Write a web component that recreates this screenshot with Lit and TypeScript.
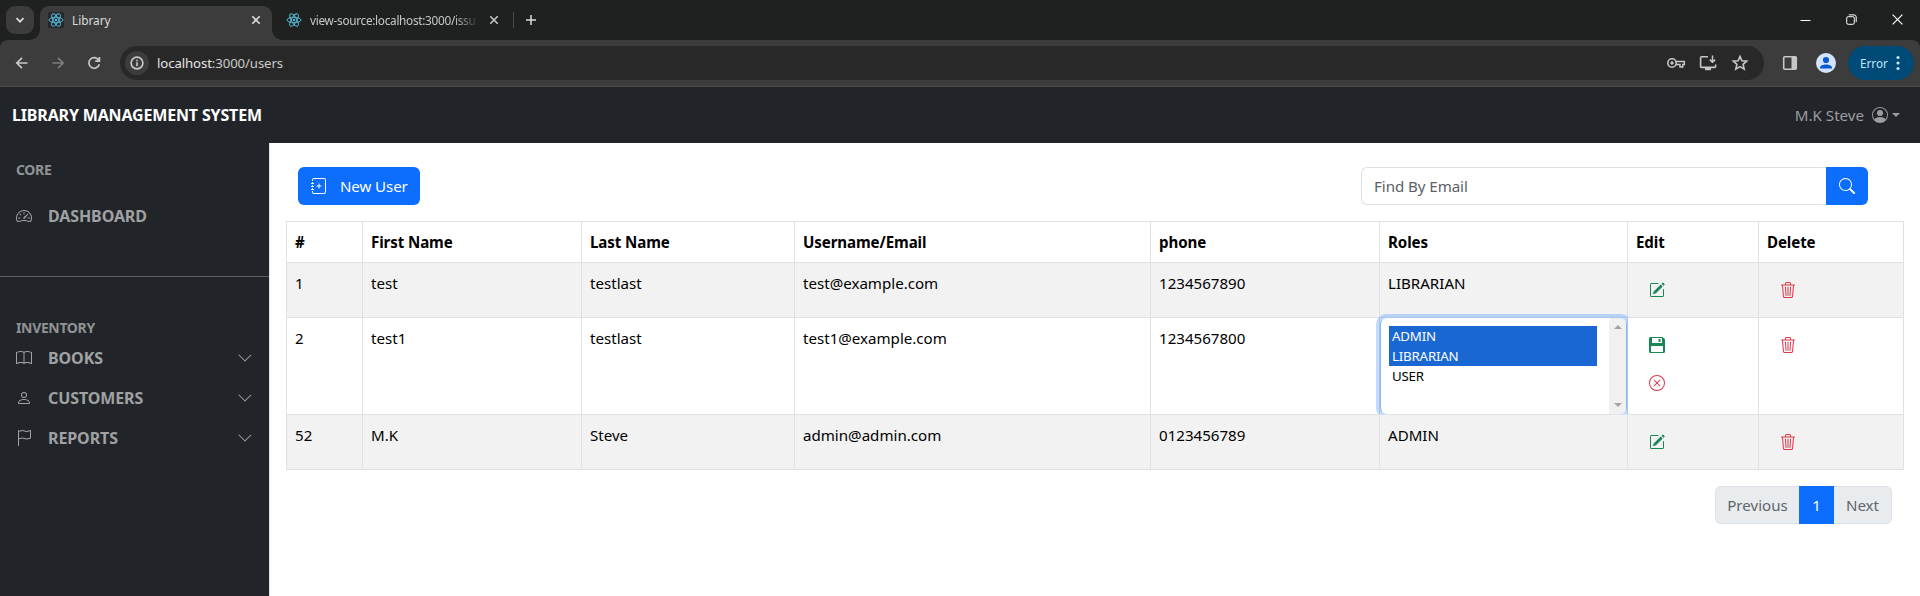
import { LitElement, html, css, svg } from "lit";
import { customElement, property } from "lit/decorators.js";

const ICONS: Record<string, string[]> = {
  speedometer: [
    "M8 4a.5.5 0 0 1 .5.5V6a.5.5 0 0 1-1 0V4.5A.5.5 0 0 1 8 4zM3.732 5.732a.5.5 0 0 1 .707 0l.915.914a.5.5 0 1 1-.708.708l-.914-.915a.5.5 0 0 1 0-.707zM2 10a.5.5 0 0 1 .5-.5h1.586a.5.5 0 0 1 0 1H2.5A.5.5 0 0 1 2 10zm9.5 0a.5.5 0 0 1 .5-.5h1.5a.5.5 0 0 1 0 1H12a.5.5 0 0 1-.5-.5zm.754-4.246a.389.389 0 0 0-.527-.02L7.547 9.31a.91.91 0 1 0 1.302 1.258l3.434-4.297a.389.389 0 0 0-.029-.518z",
    "M0 10a8 8 0 1 1 15.547 2.661c-.442 1.253-1.845 1.602-2.932 1.25C11.309 13.488 9.475 13 8 13c-1.474 0-3.31.488-4.615.911-1.087.352-2.49.003-2.932-1.25A7.988 7.988 0 0 1 0 10zm8-7a7 7 0 0 0-6.603 9.329c.203.575.923.876 1.68.63C4.397 12.533 6.358 12 8 12s3.604.532 4.923.96c.757.245 1.477-.056 1.68-.631A7 7 0 0 0 8 3z",
  ],
  book: [
    "M1 2.828c.885-.37 2.154-.769 3.388-.893 1.33-.134 2.458.063 3.112.752v9.746c-.935-.53-2.12-.603-3.213-.493-1.18.12-2.37.461-3.287.811V2.828zm7.5-.141c.654-.689 1.782-.886 3.112-.752 1.234.124 2.503.523 3.388.893v9.923c-.918-.35-2.107-.692-3.287-.81-1.094-.111-2.278-.039-3.213.492V2.687zM8 1.783C7.015.936 5.587.81 4.287.94c-1.514.153-3.042.672-3.994 1.105A.5.5 0 0 0 0 2.5v11a.5.5 0 0 0 .707.455c.882-.4 2.303-.881 3.68-1.02 1.409-.142 2.59.087 3.223.877a.5.5 0 0 0 .78 0c.633-.79 1.814-1.019 3.222-.877 1.378.139 2.8.62 3.681 1.02A.5.5 0 0 0 16 13.5v-11a.5.5 0 0 0-.293-.455c-.952-.433-2.48-.952-3.994-1.105C10.413.809 8.985.936 8 1.783z",
  ],
  person: [
    "M8 8a3 3 0 1 0 0-6 3 3 0 0 0 0 6Zm2-3a2 2 0 1 1-4 0 2 2 0 0 1 4 0Zm4 8c0 1-1 1-1 1H3s-1 0-1-1 1-4 6-4 6 3 6 4Zm-1-.004c-.001-.246-.154-.986-.832-1.664C11.516 10.68 10.289 10 8 10c-2.29 0-3.516.68-4.168 1.332-.678.678-.83 1.418-.832 1.664h10Z",
  ],
  flag: [
    "M14.778.085A.5.5 0 0 1 15 .5V8a.5.5 0 0 1-.314.464L14.5 8l.186.464-.003.001-.006.003-.023.009a12.435 12.435 0 0 1-.397.15c-.264.095-.631.223-1.047.35-.816.252-1.879.523-2.71.523-.847 0-1.548-.28-2.158-.525l-.028-.01C7.68 8.71 7.14 8.5 6.5 8.5c-.7 0-1.638.23-2.437.477A19.626 19.626 0 0 0 3 9.342V15.5a.5.5 0 0 1-1 0V.5a.5.5 0 0 1 1 0v.282c.226-.079.496-.17.79-.26C4.606.272 5.67 0 6.5 0c.84 0 1.524.277 2.121.519l.043.018C9.286.788 9.828 1 10.5 1c.7 0 1.638-.23 2.437-.477a19.587 19.587 0 0 0 1.349-.476l.019-.007.004-.002h.001M14 1.221c-.22.078-.48.167-.766.255-.81.252-1.872.523-2.734.523-.886 0-1.592-.286-2.203-.534l-.008-.003C7.662 1.21 7.139 1 6.5 1c-.669 0-1.606.229-2.415.478A21.294 21.294 0 0 0 3 1.845v6.433c.22-.078.48-.167.766-.255C4.576 7.77 5.638 7.5 6.5 7.5c.847 0 1.548.28 2.158.525l.028.01C9.32 8.29 9.86 8.5 10.5 8.5c.668 0 1.606-.229 2.415-.478A21.317 21.317 0 0 0 14 7.655V1.222z",
  ],
  chevron: [
    "M1.646 4.646a.5.5 0 0 1 .708 0L8 10.293l5.646-5.647a.5.5 0 0 1 .708.708l-6 6a.5.5 0 0 1-.708 0l-6-6a.5.5 0 0 1 0-.708z",
  ],
  journal: [
    "M8 5.5a.5.5 0 0 1 .5.5v1.5H10a.5.5 0 0 1 0 1H8.5V10a.5.5 0 0 1-1 0V8.5H6a.5.5 0 0 1 0-1h1.5V6a.5.5 0 0 1 .5-.5z",
    "M3 0h10a2 2 0 0 1 2 2v12a2 2 0 0 1-2 2H3a2 2 0 0 1-2-2v-1h1v1a1 1 0 0 0 1 1h10a1 1 0 0 0 1-1V2a1 1 0 0 0-1-1H3a1 1 0 0 0-1 1v1H1V2a2 2 0 0 1 2-2z",
    "M1 5v-.5a.5.5 0 0 1 1 0V5h.5a.5.5 0 0 1 0 1h-2a.5.5 0 0 1 0-1H1zm0 3v-.5a.5.5 0 0 1 1 0V8h.5a.5.5 0 0 1 0 1h-2a.5.5 0 0 1 0-1H1zm0 3v-.5a.5.5 0 0 1 1 0v.5h.5a.5.5 0 0 1 0 1h-2a.5.5 0 0 1 0-1H1z",
  ],
  search: [
    "M11.742 10.344a6.5 6.5 0 1 0-1.397 1.398h-.001c.03.04.062.078.098.115l3.85 3.85a1 1 0 0 0 1.415-1.414l-3.85-3.85a1.007 1.007 0 0 0-.115-.1zM12 6.5a5.5 5.5 0 1 1-11 0 5.5 5.5 0 0 1 11 0z",
  ],
  edit: [
    "M15.502 1.94a.5.5 0 0 1 0 .706L14.459 3.69l-2-2L13.502.646a.5.5 0 0 1 .707 0l1.293 1.293zm-1.75 2.456-2-2L4.939 9.21a.5.5 0 0 0-.121.196l-.805 2.414a.25.25 0 0 0 .316.316l2.414-.805a.5.5 0 0 0 .196-.12l6.813-6.814z",
    "M1 13.5A1.5 1.5 0 0 0 2.5 15h11a1.5 1.5 0 0 0 1.5-1.5v-6a.5.5 0 0 0-1 0v6a.5.5 0 0 1-.5.5h-11a.5.5 0 0 1-.5-.5v-11a.5.5 0 0 1 .5-.5H9a.5.5 0 0 0 0-1H2.5A1.5 1.5 0 0 0 1 2.5v11z",
  ],
  save: [
    "M1.5 0H13.1a1.5 1.5 0 0 1 1.06.44l1.4 1.4A1.5 1.5 0 0 1 16 2.9V14.5a1.5 1.5 0 0 1-1.5 1.5h-13A1.5 1.5 0 0 1 0 14.5v-13A1.5 1.5 0 0 1 1.5 0zM3 1v4.5a.5.5 0 0 0 .5.5h9a.5.5 0 0 0 .5-.5V1zM9.5 2h2v3h-2zM2 9.5V15h12V9.5a.5.5 0 0 0-.5-.5h-11a.5.5 0 0 0-.5.5z",
  ],
  cancel: [
    "M8 15A7 7 0 1 1 8 1a7 7 0 0 1 0 14zm0 1A8 8 0 1 0 8 0a8 8 0 0 0 0 16z",
    "M4.646 4.646a.5.5 0 0 1 .708 0L8 7.293l2.646-2.647a.5.5 0 0 1 .708.708L8.707 8l2.647 2.646a.5.5 0 0 1-.708.708L8 8.707l-2.646 2.647a.5.5 0 0 1-.708-.708L7.293 8 4.646 5.354a.5.5 0 0 1 0-.708z",
  ],
  trash: [
    "M6.5 1h3a.5.5 0 0 1 .5.5v1H6v-1a.5.5 0 0 1 .5-.5ZM11 2.5v-1A1.5 1.5 0 0 0 9.5 0h-3A1.5 1.5 0 0 0 5 1.5v1H2.506a.58.58 0 0 0-.01 0H1.5a.5.5 0 0 0 0 1h.538l.853 10.66A2 2 0 0 0 4.885 16h6.23a2 2 0 0 0 1.994-1.84l.853-10.66h.538a.5.5 0 0 0 0-1h-.995a.59.59 0 0 0-.01 0H11Zm1.958 1-.846 10.58a1 1 0 0 1-.997.92h-6.23a1 1 0 0 1-.997-.92L3.042 3.5h9.916Zm-7.487 1a.5.5 0 0 1 .528.47l.5 8.5a.5.5 0 0 1-.998.06L5 5.03a.5.5 0 0 1 .47-.53Zm5.058 0a.5.5 0 0 1 .47.53l-.5 8.5a.5.5 0 1 1-.998-.06l.5-8.5a.5.5 0 0 1 .528-.47ZM8 4.5a.5.5 0 0 1 .5.5v8.5a.5.5 0 0 1-1 0V5a.5.5 0 0 1 .5-.5Z",
  ],
  account: [
    "M11 6a3 3 0 1 1-6 0 3 3 0 0 1 6 0z",
    "M0 8a8 8 0 1 1 16 0A8 8 0 0 1 0 8zm8-7a7 7 0 0 0-5.468 11.37C3.242 11.226 4.805 10 8 10s4.757 1.225 5.468 2.37A7 7 0 0 0 8 1z",
  ],
};

const icon = (name: string, cls = "") => html`<svg class="bi ${cls}" viewBox="0 0 16 16" fill="currentColor">
  ${ICONS[name].map((d) => svg`<path fill-rule="evenodd" d=${d}></path>`)}
</svg>`;

const line = (size: number, body: unknown, cls = "") => html`<svg
  class="line ${cls}" width=${size} height=${size} viewBox="0 0 ${size} ${size}"
  fill="none" stroke="currentColor">${body}</svg>`;

const reactLogo = html`<svg class="logo" viewBox="0 0 16 16" fill="none" stroke="#58b9d4" stroke-width="0.95">
  <ellipse cx="8" cy="8" rx="7" ry="2.7"></ellipse>
  <ellipse cx="8" cy="8" rx="7" ry="2.7" transform="rotate(60 8 8)"></ellipse>
  <ellipse cx="8" cy="8" rx="7" ry="2.7" transform="rotate(120 8 8)"></ellipse>
  <circle cx="8" cy="8" r="1.3" fill="#58b9d4" stroke="none"></circle>
</svg>`;

const closeGlyph = line(10, svg`<path d="M1.3 1.3l7.4 7.4M8.7 1.3L1.3 8.7" stroke-width="1.6"></path>`);

@customElement("browser-chrome")
class BrowserChrome extends LitElement {
  static styles = css`
    :host { display: block; font-family: "Noto Sans", "Open Sans", sans-serif; color: #dcdcdc; }
    svg { display: block; flex: none; }
    .strip { display: flex; height: 40px; background: #1f2120; padding-left: 6px; box-sizing: border-box; }
    .tabsearch { width: 28px; height: 28px; margin: 6px 6px 0 0; border-radius: 9px; background: #3c3c3c; display: grid; place-items: center; }
    .tab { display: flex; align-items: center; height: 28px; margin-top: 6px; padding-bottom: 6px; box-sizing: content-box; font-size: 11.8px; }
    .tab span { white-space: nowrap; }
    .active { position: relative; width: 232px; box-sizing: border-box; height: 34px; background: #3c3c3c; border-radius: 9px 9px 0 0; padding: 0 11px 6px 8px; }
    .active::before, .active::after { content: ""; position: absolute; bottom: 0; width: 10px; height: 10px; }
    .active::before { left: -10px; background: radial-gradient(circle at 0 0, transparent 9.5px, #3c3c3c 10px); }
    .active::after { right: -10px; background: radial-gradient(circle at 100% 0, transparent 9.5px, #3c3c3c 10px); }
    .logo { width: 16px; height: 16px; margin-right: 8px; border-radius: 2px; }
    .active .logo { background: #24272b; }
    .grow { flex: 1; }
    .other { margin-left: 14px; color: #c7c7c7; }
    .other span { width: 168px; margin-right: 11px; letter-spacing: -0.3px; -webkit-mask-image: linear-gradient(90deg, #000 144px, transparent 170px); mask-image: linear-gradient(90deg, #000 144px, transparent 170px); }
    .sep { width: 1px; height: 16px; background: #4a4b4b; margin: 12px 11px 0 14px; }
    .new { margin-top: 14px; }
    .win { display: flex; gap: 35px; padding: 14px 17px 0 0; color: #fff; }
    .bar { display: flex; align-items: center; height: 47px; box-sizing: border-box; padding: 0 6px 1px 14px; background: #3c3c3c; border-bottom: 1px solid #4a4a4a; border-radius: 8px 8px 0 0; }
    .wrap { background: linear-gradient(#1f2120 50%, #212529 50%); }
    .bar { border-radius: 8px 8px 0 0; }
    .navs { display: flex; gap: 20px; width: 106px; color: #c7c7c7; }
    .navs .dim { color: #7c7c7c; }
    .omni { flex: 1; display: flex; align-items: center; height: 34px; border-radius: 17px; background: #282828; padding: 0 14px 0 5px; font-size: 13.2px; color: #c9cac9; }
    .info { width: 24px; height: 24px; border-radius: 50%; background: #3c3c3c; display: grid; place-items: center; margin-right: 8px; }
    .url { flex: 1; letter-spacing: -0.1px; }
    .url b { font-weight: 400; color: #e6e6e6; }
    .tools { display: flex; gap: 12px; align-items: center; color: #c7c7c7; }
    .panel { margin: 0 18px; color: #c7c7c7; }
    .pill { display: flex; align-items: center; justify-content: space-between; width: 66px; height: 34px; box-sizing: border-box; border-radius: 17px; background: #004a77; color: #c2e7ff; font-size: 11.7px; padding: 0 14px 0 12px; margin-left: 12px; }
  `;

  render() {
    return html`
      <div class="strip">
        <div class="tabsearch">${line(10, svg`<path d="M1.5 3.2L5 6.7L8.5 3.2" stroke-width="1.7"></path>`)}</div>
        <div class="tab active">${reactLogo}<span>Library</span><div class="grow"></div>${closeGlyph}</div>
        <div class="tab other">${reactLogo}<span>view-source:localhost:3000/issu</span>${closeGlyph}</div>
        <div class="sep"></div>
        <div class="new">${line(12, svg`<path d="M6 1v10M1 6h10" stroke-width="1.5"></path>`)}</div>
        <div class="grow"></div>
        <div class="win">
          ${line(11, svg`<path d="M.5 6.5h10" stroke-width="1"></path>`)}
          ${line(11, svg`<rect x=".7" y="2.7" width="7.6" height="7.6" rx="1.5"></rect><path d="M2.8 .9H8a2.2 2.2 0 0 1 2.2 2.2v5"></path>`)}
          ${line(11, svg`<path d="M.6 .6l9.8 9.8M10.4 .6L.6 10.4" stroke-width="1.2"></path>`)}
        </div>
      </div>
      <div class="wrap"><div class="bar">
        <div class="navs">
          ${line(16, svg`<path d="M13.5 8H3M8 2.8L2.8 8L8 13.2" stroke-width="1.7"></path>`)}
          ${line(16, svg`<path d="M2.5 8H13M8 2.8L13.2 8L8 13.2" stroke-width="1.7"></path>`, "dim")}
          ${line(16, svg`<path d="M12.7 5.2A5.3 5.3 0 1 0 13.3 9.2M13.4 2v4.2H9.2" stroke-width="1.7"></path>`)}
        </div>
        <div class="omni">
          <div class="info">${line(14, svg`<circle cx="7" cy="7" r="5.9" stroke-width="1.6"></circle><path d="M7 6.2v4M7 3.8v1.4" stroke-width="1.6"></path>`)}</div>
          <div class="url"><b>localhost</b>:3000/users</div>
          <div class="tools">
            ${line(20, svg`<circle cx="6" cy="10" r="4.2" stroke-width="1.6"></circle><circle cx="6" cy="10" r="1.7" fill="currentColor" stroke="none"></circle><path d="M10 8.6h8.3v2.8h-1.5v2.6h-2.8v-2.6H10" stroke-width="1.5"></path>`)}
            ${line(20, svg`<path d="M10 3.8H3.6a1 1 0 0 0-1 1v8.6a1 1 0 0 0 1 1h13a1 1 0 0 0 1-1V11.5" stroke-width="1.6"></path><path d="M14.5 2.5v6M11.8 6.6l2.7 2.7l2.7-2.7" stroke-width="1.5"></path><path d="M7 16h6" stroke-width="2.4"></path>`)}
            ${line(20, svg`<path d="M10 3.4l1.9 4.4l4.8.4l-3.6 3.2l1.1 4.7L10 13.6l-4.2 2.5l1.1-4.7L3.3 8.2l4.8-.4z" stroke-width="1.6"></path>`)}
          </div>
        </div>
        <div class="panel">${line(16, svg`<rect x="1.7" y="1.7" width="12.6" height="12.6" rx="1" stroke-width="1.6"></rect><path d="M10 2h4v12h-4z" fill="currentColor"></path>`)}</div>
        <svg width="20" height="20" viewBox="0 0 20 20"><circle cx="10" cy="10" r="10" fill="#d3e3fd"></circle><circle cx="10" cy="7" r="3.1" fill="#0b57d0"></circle><path d="M4 15.6v-.9c0-2.3 3.4-3.3 6-3.3s6 1 6 3.3v.9z" fill="#0b57d0"></path></svg>
        <div class="pill">Error<svg width="4" height="16" viewBox="0 0 4 16" fill="#c2e7ff"><circle cx="2" cy="2.5" r="1.6"></circle><circle cx="2" cy="8" r="1.6"></circle><circle cx="2" cy="13.5" r="1.6"></circle></svg></div>
      </div></div>
    `;
  }
}

interface User { id: number; first: string; last: string; email: string; phone: string; role: string; editing?: boolean }

const USERS: User[] = [
  { id: 1, first: "test", last: "testlast", email: "test@example.com", phone: "1234567890", role: "LIBRARIAN" },
  { id: 2, first: "test1", last: "testlast", email: "test1@example.com", phone: "1234567800", role: "", editing: true },
  { id: 52, first: "M.K", last: "Steve", email: "admin@admin.com", phone: "0123456789", role: "ADMIN" },
];

@customElement("user-table")
class UserTable extends LitElement {
  @property({ attribute: false }) users: User[] = [];

  static styles = css`
    :host { display: block; border: solid #dee2e6; border-width: 1px 0 0 1px; color: #000; }
    svg { display: block; width: 16px; height: 16px; }
    .row { display: grid; grid-template-columns: 76px 219px 213px 356px 229px 248px 131px 145px; min-height: 55px; }
    .head { min-height: 41px; font-weight: 700; font-size: 15.1px; letter-spacing: -0.1px; }
    .cell { border: solid #dee2e6; border-width: 0 1px 1px 0; padding: 8px; line-height: 24px; }
    .striped { background: #f2f2f2; }
    .tall { min-height: 97px; }
    .actions { display: flex; flex-direction: column; padding: 8px 8px 8px 20.5px; }
    .act { height: 38px; display: flex; align-items: center; }
    .green { color: #198754; }
    .red { color: #dc3545; }
    .selcell { padding: 0; display: flex; }
    .select { flex: 1; display: flex; background: #fff; border: solid #86b7fe; border-width: 0 1px; border-radius: 6px; box-shadow: 0 0 0 4px rgba(13, 110, 253, 0.25); clip-path: inset(-4px -1px 0 -4px); }
    .options { flex: 1; padding: 8px 12px 0 8px; font-size: 13.3px; line-height: 20px; }
    .opt { padding-left: 3px; letter-spacing: -0.2px; }
    .sel { background: #1967d2; color: #fff; }
    .scroll { width: 17px; background: #f0f0f0; display: flex; flex-direction: column; justify-content: space-between; align-items: center; padding: 7px 0; box-sizing: border-box; border-radius: 0 5px 5px 0; }
    .up, .down { border: 4px solid transparent; }
    .up { border-top-width: 0; border-bottom-color: #a3a3a3; }
    .down { border-bottom-width: 0; border-top-color: #a3a3a3; }
  `;

  render() {
    return html`
      <div class="row head">
        ${["#", "First Name", "Last Name", "Username/Email", "phone", "Roles", "Edit", "Delete"].map((t) => html`<div class="cell">${t}</div>`)}
      </div>
      ${this.users.map((u, i) => html`
        <div class="row ${i % 2 === 0 ? "striped" : ""} ${u.editing ? "tall" : ""}">
          <div class="cell">${u.id}</div>
          <div class="cell">${u.first}</div>
          <div class="cell">${u.last}</div>
          <div class="cell">${u.email}</div>
          <div class="cell">${u.phone}</div>
          ${u.editing
            ? html`<div class="cell selcell"><div class="select">
                <div class="options"><div class="opt sel">ADMIN</div><div class="opt sel">LIBRARIAN</div><div class="opt">USER</div></div>
                <div class="scroll"><div class="up"></div><div class="down"></div></div>
              </div></div>`
            : html`<div class="cell">${u.role}</div>`}
          <div class="cell actions">
            ${u.editing
              ? html`<div class="act green">${icon("save")}</div><div class="act red">${icon("cancel")}</div>`
              : html`<div class="act green">${icon("edit")}</div>`}
          </div>
          <div class="cell actions"><div class="act red">${icon("trash")}</div></div>
        </div>`)}
    `;
  }
}

@customElement("app-root")
class AppRoot extends LitElement {
  static styles = css`
    :host { display: flex; flex-direction: column; width: 1920px; height: 596px; overflow: hidden; background: #fff; font: 400 15.1px/24px "Noto Sans", "Open Sans", sans-serif; }
    svg { display: block; width: 16px; height: 16px; flex: none; }
    .navbar { display: flex; justify-content: space-between; align-items: center; height: 56px; background: #212529; padding: 0 20px 0 12px; }
    .brand { color: #fff; font-weight: 700; font-size: 16px; letter-spacing: -0.16px; }
    .user { display: flex; align-items: center; color: #9b9d9e; }
    .user svg { margin: 0 4px 0 8px; }
    .caret { border: 4.5px solid transparent; border-top-color: #9b9d9e; border-bottom: 0; }
    .main { flex: 1; display: flex; }
    .side { width: 269px; box-sizing: border-box; background: #212529; color: #a0a1a2; font-weight: 700; font-size: 16px; }
    .heading { padding: 0 16px; font-size: 14px; line-height: 20px; color: #909294; letter-spacing: -0.35px; }
    .core { padding-top: 17px; }
    .item { display: flex; align-items: center; height: 40px; padding: 0 16px; }
    .item span { flex: 1; margin-left: 16px; letter-spacing: -0.1px; }
    .dash { margin-top: 16px; }
    .rule { height: 1px; background: #5d6164; margin: 40px 0 41px; }
    .content { flex: 1; border-left: 1px solid #dee2e6; padding: 24px 16px 0; }
    .top { display: flex; justify-content: space-between; padding: 0 36px 0 12px; height: 38px; margin-bottom: 16px; }
    .btn { display: flex; align-items: center; background: #0d6efd; color: #fff; border-radius: 6px; padding: 0 13px; width: 122px; box-sizing: border-box; white-space: nowrap; letter-spacing: -0.1px; }
    .btn svg { margin-right: 13px; }
    .find { display: flex; width: 507px; }
    .input { flex: 1; border: 1px solid #dee2e6; border-right: 0; border-radius: 6px 0 0 6px; padding: 6px 12px; color: #5b6065; box-sizing: border-box; letter-spacing: -0.05px; }
    .go { width: 42px; background: #0d6efd; color: #fff; border-radius: 0 6px 6px 0; display: grid; place-items: center; }
    .pages { display: flex; justify-content: flex-end; margin-top: 16px; padding-right: 12px; height: 38px; line-height: 36px; color: #5f6569; }
    .page { box-sizing: border-box; border: 1px solid #dee2e6; background: #e9ecef; text-align: center; }
    .prev { width: 84px; border-radius: 6px 0 0 6px; border-right: 0; }
    .cur { width: 35px; background: #0d6efd; border-color: #0d6efd; color: #fff; }
    .next { width: 58px; border-radius: 0 6px 6px 0; border-left: 0; }
  `;

  private item(name: string, label: string) {
    return html`<div class="item">${icon(name)}<span>${label}</span>${icon("chevron")}</div>`;
  }

  render() {
    return html`
      <browser-chrome></browser-chrome>
      <div class="navbar">
        <div class="brand">LIBRARY MANAGEMENT SYSTEM</div>
        <div class="user">M.K Steve${icon("account")}<div class="caret"></div></div>
      </div>
      <div class="main">
        <div class="side">
          <div class="heading core">CORE</div>
          <div class="item dash">${icon("speedometer")}<span>DASHBOARD</span></div>
          <div class="rule"></div>
          <div class="heading">INVENTORY</div>
          ${this.item("book", "BOOKS")} ${this.item("person", "CUSTOMERS")} ${this.item("flag", "REPORTS")}
        </div>
        <div class="content">
          <div class="top">
            <div class="btn">${icon("journal")}New User</div>
            <div class="find"><div class="input">Find By Email</div><div class="go">${icon("search")}</div></div>
          </div>
          <user-table .users=${USERS}></user-table>
          <div class="pages">
            <div class="page prev">Previous</div><div class="page cur">1</div><div class="page next">Next</div>
          </div>
        </div>
      </div>
    `;
  }
}
